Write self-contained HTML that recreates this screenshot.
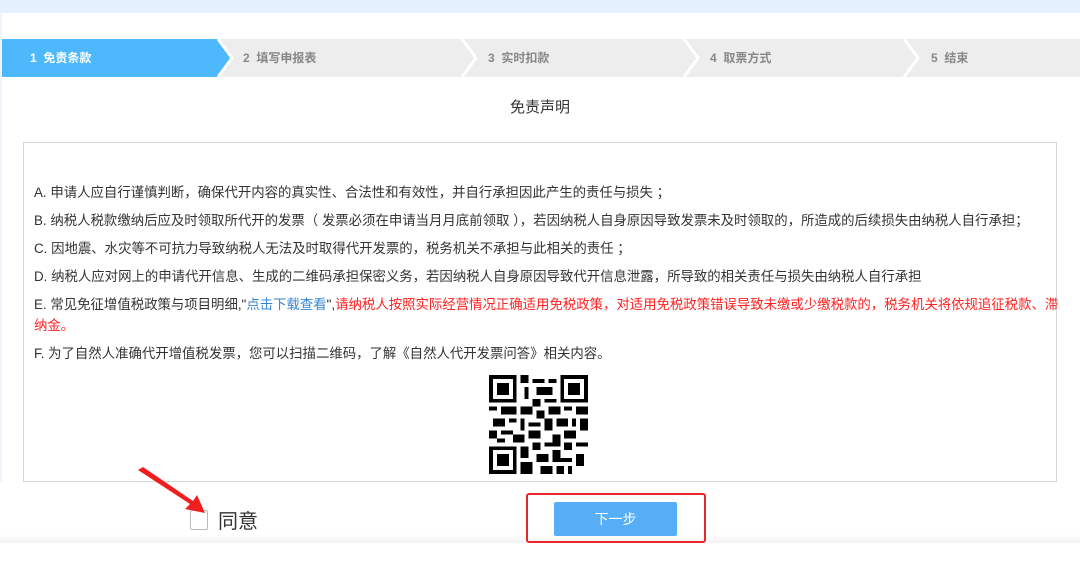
<!DOCTYPE html>
<html><head><meta charset="utf-8"><style>
*{margin:0;padding:0;box-sizing:border-box}
body{width:1080px;height:563px;background:#fff;position:relative;overflow:hidden;font-family:"Liberation Sans","Noto Sans CJK SC",sans-serif;color:#333}
.top{position:absolute;left:0;top:0;width:1080px;height:13px;background:#e3f0fd}
.lb{position:absolute;left:0;top:13px;width:2px;height:530px;background:#eef5fd}
.st{position:absolute;top:0;height:38px;line-height:38px;font-size:12px;font-weight:bold;color:#888}
.l{position:absolute;left:34px;font-size:13.4px;color:#333;white-space:nowrap}
.box{position:absolute;left:23px;top:142px;width:1034px;height:340px;border:1px solid #d6d6d6}
</style></head><body>
<div class="top"></div><div class="lb"></div>
<svg width="1078" height="38" style="position:absolute;left:2px;top:39px">
<polygon points="0,0 1078,0 1078,38 0,38" fill="#ededed"/>
<polygon points="0,0 216,0 230,19 216,38 0,38" fill="#4db8fb"/>
<polyline points="216,0 230,19 216,38" fill="none" stroke="#fff" stroke-width="3"/>
<polyline points="460,0 474,19 460,38" fill="none" stroke="#fff" stroke-width="3"/>
<polyline points="682,0 696,19 682,38" fill="none" stroke="#fff" stroke-width="3"/>
<polyline points="902,0 916,19 902,38" fill="none" stroke="#fff" stroke-width="3"/>
</svg>
<div class="st" style="left:30px;top:39px;color:#fff">1&nbsp; 免责条款</div>
<div class="st" style="left:243px;top:39px">2&nbsp; 填写申报表</div>
<div class="st" style="left:488px;top:39px">3&nbsp; 实时扣款</div>
<div class="st" style="left:710px;top:39px">4&nbsp; 取票方式</div>
<div class="st" style="left:931px;top:39px">5&nbsp; 结束</div>
<div style="position:absolute;left:0;width:1080px;top:96px;text-align:center;font-size:15px;color:#333">免责声明</div>
<div class="box"></div>
<div class="l" style="top:181px">A. 申请人应自行谨慎判断，确保代开内容的真实性、合法性和有效性，并自行承担因此产生的责任与损失 ；</div>
<div class="l" style="top:209px">B. 纳税人税款缴纳后应及时领取所代开的发票（ 发票必须在申请当月月底前领取 ），若因纳税人自身原因导致发票未及时领取的，所造成的后续损失由纳税人自行承担；</div>
<div class="l" style="top:237px">C. 因地震、水灾等不可抗力导致纳税人无法及时取得代开发票的，税务机关不承担与此相关的责任 ；</div>
<div class="l" style="top:265px">D. 纳税人应对网上的申请代开信息、生成的二维码承担保密义务，若因纳税人自身原因导致代开信息泄露，所导致的相关责任与损失由纳税人自行承担</div>
<div class="l" style="top:293px">E. 常见免征增值税政策与项目明细,"<span style="color:#3a86d6">点击下载查看</span>",<span style="color:#f22">请纳税人按照实际经营情况正确适用免税政策，对适用免税政策错误导致未缴或少缴税款的，税务机关将依规追征税款、滞</span></div>
<div class="l" style="top:314px;color:#f22">纳金。</div>
<div class="l" style="top:342px">F. 为了自然人准确代开增值税发票，您可以扫描二维码，了解《自然人代开发票问答》相关内容。</div>
<svg style="position:absolute;left:489px;top:375px" width="99" height="99" viewBox="0 0 25 25" shape-rendering="crispEdges">
<g fill="#000">
<path d="M0 0h7v7h-7zM1 1v5h5v-5zM2 2h3v3h-3z" fill-rule="evenodd"/>
<path d="M18 0h7v7h-7zM19 1v5h5v-5zM20 2h3v3h-3z" fill-rule="evenodd"/>
<path d="M0 18h7v7h-7zM1 19v5h5v-5zM2 20h3v3h-3z" fill-rule="evenodd"/>
<path d="M8 0h2v2h-2zM11 1h3v1h-3zM9 3h1v3h-1zM12 3h4v2h-4zM15 1h2v1h-2zM11 6h2v2h-2zM14 6h3v1h-3zM0 8h2v1h-2zM3 8h4v2h-4zM8 8h3v2h-3zM12 9h2v2h-2zM15 8h3v2h-3zM19 8h2v1h-2zM22 8h3v2h-3zM1 11h3v2h-3zM5 11h2v1h-2zM8 11h1v3h-1zM10 12h3v1h-3zM14 11h2v3h-2zM17 11h3v2h-3zM21 11h1v2h-1zM23 11h2v3h-2zM0 14h2v2h-2zM3 14h3v1h-3zM6 15h3v2h-3zM10 14h3v2h-3zM16 15h2v1h-2zM19 14h3v2h-3zM2 16h2v1h-2zM11 17h2v2h-2zM14 17h4v1h-4zM19 17h2v2h-2zM22 17h3v1h-3zM8 18h2v3h-2zM12 20h3v2h-3zM16 19h2v3h-2zM18 21h3v1h-3zM22 20h2v3h-2zM8 22h3v3h-3zM13 23h3v2h-3zM17 23h2v2h-2zM20 23h1v2h-1zM16 16h2v1h-2zM10 9h1v1h-1z"/>
</g></svg>
<div style="position:absolute;left:0;top:482px;width:1080px;height:61px;background:linear-gradient(#fff,#fff 85%,#f3f3f3)"></div>
<div style="position:absolute;left:190px;top:510px;width:18px;height:20px;border:1px solid #bbb;border-radius:2px;background:#fff"></div>
<div style="position:absolute;left:218px;top:505px;font-size:20px;color:#333">同意</div>
<svg style="position:absolute;left:135px;top:465px" width="80" height="60"><polygon points="3,5 8,2 58,36 62,30 70,48 50,44 55,39" fill="#f01f1f"/></svg>
<div style="position:absolute;left:526px;top:493px;width:180px;height:50px;border:2px solid #e8262b;border-radius:3px"></div>
<div style="position:absolute;left:554px;top:502px;width:123px;height:34px;background:#56aef6;border-radius:2px;color:#fff;font-size:14px;text-align:center;line-height:34px">下一步</div>
</body></html>
